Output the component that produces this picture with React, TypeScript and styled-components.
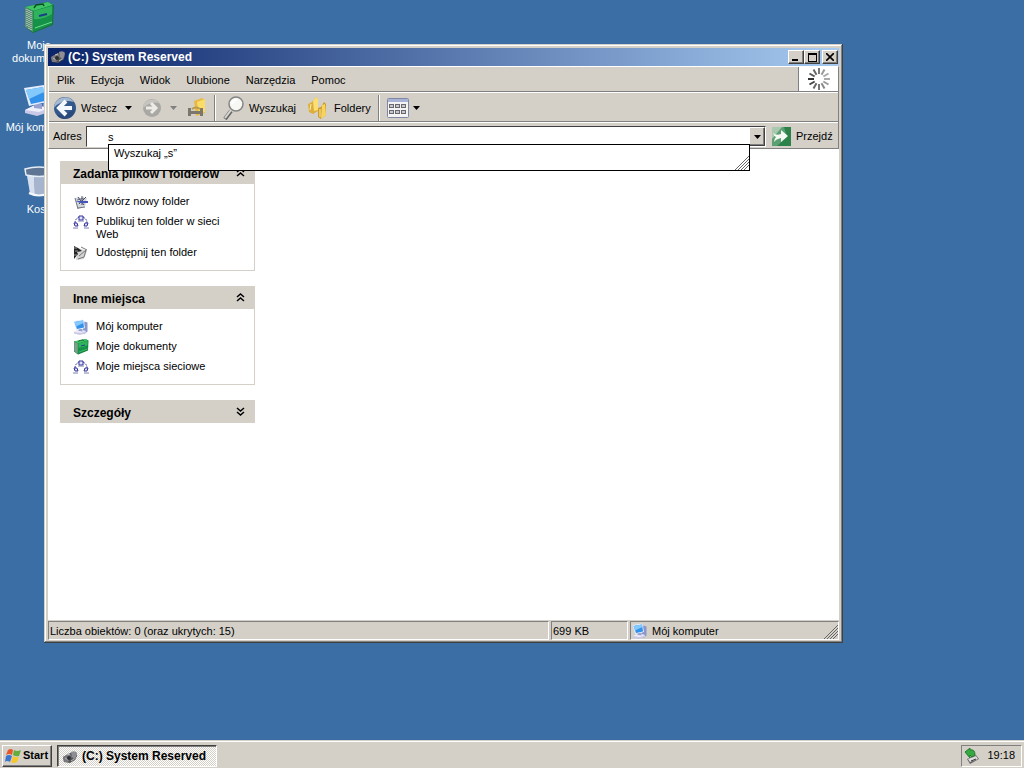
import {useState} from 'react';
import type {ReactNode} from 'react';
import styled, {createGlobalStyle, css} from 'styled-components';

const GlobalStyle = createGlobalStyle`
    *{
        box-sizing: border-box;
    }
    body{
        margin: 0;
        font-family: "Liberation Sans", Arial, sans-serif;
        font-size: 11px;
        line-height: 13px;
        color: #000;
    }
    button, input{
        font: inherit;
        color: inherit;
    }
    svg{
        display: block;
        flex: none;
    }
`;

const raised = css`
    border: 1px solid;
    border-color: #fff #404040 #404040 #fff;
    box-shadow: inset -1px -1px #808080;
`;
const sunken = css`
    border: 1px solid;
    border-color: #808080 #fff #fff #808080;
`;

const Screen = styled.div`
    display: flex;
    flex-direction: column;
    min-height: 100vh;
    background: #3a6ea5;
`;
const Desktop = styled.main`
    position: relative;
    flex: 1;
    overflow: hidden;
`;
const Shortcuts = styled.div`
    display: grid;
    grid-auto-rows: 82px;
    width: 78px;
    padding-top: 2px;
`;
const Shortcut = styled.button`
    display: flex;
    flex-direction: column;
    align-items: center;
    gap: 5px;
    padding: 0;
    border: none;
    background: none;
    color: #fff;
`;

const Window = styled.section`
    position: absolute;
    inset: 44px 181px 97px 44px;
    display: flex;
    flex-direction: column;
    padding: 4px 4px 3px;
    background: #d4d0c8;
    box-shadow: inset -1px -1px #404040, inset 1px 1px #d4d0c8, inset -2px -2px #808080, inset 2px 2px #fff;
`;
const TitleBar = styled.header`
    display: flex;
    align-items: center;
    gap: 2px;
    height: 18px;
    padding: 0 1px 0 2px;
    background: linear-gradient(to right, #0a246a, #a6caf0);
    color: #fff;
`;
const Title = styled.h1`
    flex: 1;
    margin: 0;
    font-size: 12px;
    line-height: 14px;
`;
const CaptionButton = styled.button<{$joined?: boolean}>`
    ${raised}
    display: flex;
    align-items: center;
    justify-content: center;
    width: 16px;
    height: 14px;
    margin-left: ${(props) => props.$joined ? '-2px' : '0'};
    padding: 0;
    background: #d4d0c8;
`;

const Bars = styled.div`
    border: 1px solid #808080;
    border-top-color: #fff;
    border-left-color: #fff;
`;
const MenuRow = styled.div`
    display: flex;
    height: 25px;
    border-bottom: 1px solid #808080;
`;
const Menu = styled.nav`
    flex: 1;
    display: flex;
    align-items: center;
    border-right: 1px solid #808080;
`;
const MenuItem = styled.button`
    padding: 2px 8px 0;
    border: none;
    background: none;
`;
const Throbber = styled.div`
    display: flex;
    align-items: center;
    justify-content: center;
    width: 39px;
    background: #fff;
`;
const ToolRow = styled.div`
    display: flex;
    align-items: center;
    gap: 10px;
    height: 30px;
    padding: 1px 1px 0 4px;
    border-top: 1px solid #fff;
    border-bottom: 1px solid #808080;
`;
const ToolButton = styled.button<{$width: number}>`
    display: flex;
    align-items: center;
    gap: 4px;
    width: ${(props) => props.$width}px;
    padding: 0;
    border: none;
    background: none;
    white-space: nowrap;
`;
const ToolLabel = styled.span`
    flex: 1;
    padding-top: 1px;
    text-align: left;
`;
const Separator = styled.div`
    width: 2px;
    height: 26px;
    margin: 0 -3px;
    border-left: 1px solid #808080;
    border-right: 1px solid #fff;
`;
const AddressRow = styled.form`
    display: flex;
    align-items: center;
    gap: 6px;
    height: 26px;
    padding: 2px 1px 0 4px;
    border-top: 1px solid #fff;
`;
const AddressLabel = styled.label`
    width: 27px;
`;
const Combo = styled.div`
    position: relative;
    flex: 1;
    display: flex;
    height: 21px;
    border: 1px solid;
    border-color: #404040 #fff #fff #404040;
    background: #fff;
`;
const AddressInput = styled.input`
    flex: 1;
    min-width: 0;
    padding: 1px 0 0 21px;
    border: none;
    outline: none;
    background: none;
`;
const ComboButton = styled.button`
    ${raised}
    display: flex;
    align-items: center;
    justify-content: center;
    width: 16px;
    padding: 0;
    background: #d4d0c8;
`;
const Suggestions = styled.div`
    position: absolute;
    z-index: 1;
    top: 17px;
    left: 21px;
    right: 15px;
    display: flex;
    justify-content: space-between;
    height: 27px;
    padding-left: 5px;
    border: 1px solid #000;
    background: #fff;
`;
const Suggestion = styled.button`
    align-self: flex-start;
    padding: 2px 0;
    border: none;
    background: none;
`;
const Grip = styled.svg`
    align-self: flex-end;
`;
const GoButton = styled.button`
    display: flex;
    align-items: center;
    gap: 5px;
    width: 65px;
    padding: 0;
    border: none;
    background: none;
`;

const Content = styled.div`
    flex: 1;
    padding: 12px;
    background: #fff;
`;
const Sidebar = styled.aside`
    display: flex;
    flex-direction: column;
    gap: 15px;
    width: 195px;
`;
const PanelHeader = styled.button`
    display: flex;
    align-items: center;
    justify-content: space-between;
    width: 100%;
    height: 23px;
    padding: 0 10px 0 13px;
    border: none;
    background: #d4d0c8;
    font-weight: bold;
    font-size: 12px;
`;
const PanelTitle = styled.span`
    padding-top: 3px;
`;
const PanelBody = styled.div`
    display: flex;
    flex-direction: column;
    gap: 4px;
    padding: 10px 24px 9px 12px;
    border: 1px solid #d4d0c8;
    border-top: none;
`;
const Task = styled.a`
    display: flex;
    gap: 7px;
    min-height: 16px;
    color: inherit;
    text-decoration: none;
`;
const TaskLabel = styled.span`
    padding-top: 1px;
`;

const StatusBar = styled.footer`
    display: flex;
    gap: 2px;
    height: 20px;
    padding-top: 1px;
`;
const StatusField = styled.div<{$width?: number}>`
    ${sunken}
    flex: ${(props) => props.$width ? `0 0 ${props.$width}px` : '1'};
    display: flex;
    align-items: center;
    gap: 4px;
    padding: 1px 0 0 1px;
`;
const StatusGrip = styled(Grip)`
    margin-left: auto;
`;

const Taskbar = styled.footer`
    display: flex;
    align-items: center;
    gap: 5px;
    height: 28px;
    padding: 3px 2px 1px;
    border-top: 1px solid #d4d0c8;
    box-shadow: inset 0 1px #fff;
    background: #d4d0c8;
`;
const StartButton = styled.button`
    ${raised}
    display: flex;
    align-items: center;
    gap: 1px;
    width: 50px;
    height: 22px;
    padding: 0 1px;
    background: #d4d0c8;
    font-weight: bold;
`;
const TaskButton = styled.button`
    display: flex;
    align-items: center;
    gap: 4px;
    width: 160px;
    height: 22px;
    padding: 2px 4px 0;
    border: 1px solid;
    border-color: #404040 #fff #fff #404040;
    box-shadow: inset 1px 1px #808080;
    background: repeating-conic-gradient(#fff 0 25%, #d4d0c8 0 50%) 0 0 / 2px 2px;
    font-weight: bold;
    font-size: 12px;
`;
const Tray = styled.div`
    ${sunken}
    display: flex;
    align-items: center;
    justify-content: space-between;
    width: 61px;
    height: 22px;
    margin-left: auto;
    padding: 0 6px 0 2px;
`;

const DocumentsIcon = ({size}: {size: number}) => (
    <svg width={size} height={size} viewBox="0 0 32 32">
        <path d="M2 5 25 0l6 3-1 20-20 8-8-6z" fill="#17733c"/>
        <path d="M2 5 25 0l5 3-19 6z" fill="#3fc565"/>
        <path d="m10 9 20-6-1 19-19 8z" fill="#149247"/>
        <path d="m11 9 18-5v8q-9 6-18 5z" fill="#2fb45d"/>
        <path d="m2 5 8 4v21l-8-5z" fill="#5c8f74"/>
        <path d="M4 7v18M6 8v19M8 9v19" stroke="#d6e2da" strokeDasharray="1 1"/>
        <path d="m11 6 2-3 7-1 1 2" fill="none" stroke="#0b4f27" strokeWidth="1.5"/>
        <path d="m16 14 8-2" stroke="#1a3f86" strokeWidth="2"/>
        <path d="m12 26 17-6" stroke="#6fdb8f"/>
    </svg>
);

const ComputerIcon = ({size}: {size: number}) => (
    <svg width={size} height={size} viewBox="0 0 32 32">
        <path d="m23 5 6 2v18l-6 5-4-4z" fill="#8a97cc"/>
        <path d="m2 26 10-5 14 3v4l-12 4-12-3z" fill="#c9c8e6"/>
        <path d="m2 26 10-5 14 3-10 4z" fill="#efeefa"/>
        <path d="m11 19 8 1v5l-8-1z" fill="#97a2cf"/>
        <path d="m1 4 20-3 3 17-18 4z" fill="#e3edff"/>
        <path d="m3 6 17-3 2 14-14 3z" fill="#3391ea"/>
        <path d="m3 6 17-3 1 5L6 15z" fill="#84c9fc"/>
    </svg>
);

const BinIcon = () => (
    <svg width="32" height="32" viewBox="0 0 32 32">
        <path d="m3 5 4 22q9 5 18 0l4-22z" fill="#8398b8"/>
        <path d="m4 9 3 18 5 2-1-19z" fill="#d5dfee"/>
        <path d="m11 10 1 19q5 1 9-1l1-18z" fill="#a6b5cd"/>
        <path d="M2 3q14-4 28 0l-1 6q-13 3-26 0z" fill="#5f7594" stroke="#e6edf6" strokeWidth="1.5"/>
        <path d="M6 27q10 5 20 0" fill="none" stroke="#f4f8ff" strokeWidth="2"/>
    </svg>
);

const DriveIcon = () => (
    <svg width="16" height="16" viewBox="0 0 16 16">
        <path d="m1 8 7-4 6-1 1 4-2 4-5 3-6-1z" fill="#55555a"/>
        <path d="m1 8 7-4 2 4-4 5-4 0z" fill="#77777c"/>
        <path d="M9 3q4-2 6 1l-2 7-3-3z" fill="#8e8e94"/>
        <path d="m3 9 3 2M9 12l3-2M5 6l3-1" stroke="#bbb"/>
        <circle cx="7" cy="9" r="2" fill="#2e2e32"/>
    </svg>
);

const NetworkIcon = () => (
    <svg width="16" height="16" viewBox="0 0 16 16" fill="none" stroke="#34349a">
        <path d="M2 9q0-4 4-6M10 3q4 2 4 6" strokeDasharray="2 1"/>
        <path d="M6 2h4v4H6z" fill="#dfe2fa"/>
        <path d="M5 7h6" stroke="#7c7eb0"/>
        <path d="M1 9h3l1 3H2zM12 9h3l-1 3h-3z" fill="#dfe2fa"/>
        <path d="M0 14h5M11 14h5" stroke="#7c7eb0"/>
    </svg>
);

const NewFolderIcon = () => (
    <svg width="16" height="16" viewBox="0 0 16 16">
        <path d="m2 4 4-1 2 2 6-1-2 9-7 2z" fill="#d3d6dc"/>
        <path d="m2 4 3 11M4 6l7-2M5 14l7-1" stroke="#70757f"/>
        <path d="M9 2v9M5 3l6 8M13 3l-7 7" stroke="#4a5068"/>
        <path d="M3 7h12v2H7z" fill="#4654bd"/>
    </svg>
);

const ShareIcon = () => (
    <svg width="16" height="16" viewBox="0 0 16 16">
        <path d="m5 3 9 3-3 8-8 1z" fill="#d4d4d4"/>
        <path d="M1 1v13l4-5-1-2 5-1-4-3z" fill="#242424"/>
        <path d="m6 11 7-6-2 7-6 2M8 2l6 3" fill="none" stroke="#777"/>
        <path d="M1 3h3M2 6h3M1 10h3" stroke="#999"/>
    </svg>
);

const BackIcon = () => (
    <svg width="24" height="24" viewBox="0 0 24 24">
        <circle cx="12" cy="12" r="11" fill="#33598c"/>
        <path d="M1 12a11 11 0 0 1 20-6q-7-2-12 0t-8 6" fill="#a5b8d1"/>
        <path d="M4 19q8 0 18-6-1 9-10 10-5 0-8-4" fill="#2a4a7c"/>
        <path d="m13 5-7 7 7 7M7 12h12" fill="none" stroke="#f4f8fc" strokeWidth="4"/>
    </svg>
);

const ForwardIcon = () => (
    <svg width="20" height="20" viewBox="0 0 20 20">
        <circle cx="10" cy="10" r="9" fill="#a9a8a4"/>
        <path d="M1 10a9 9 0 0 1 16-5Q9 3 1 10" fill="#c6c5c0"/>
        <path d="m9 5 5 5-5 5M4 10h9" fill="none" stroke="#ecebe6" strokeWidth="3"/>
    </svg>
);

const UpIcon = () => (
    <svg width="20" height="22" viewBox="0 0 20 22">
        <path d="m7 4 8-3 3 2v13l-9 3z" fill="#e6ba45"/>
        <path d="m10 5 8-3v13l-6 2z" fill="#fbdc66"/>
        <path d="M1 19v-8h3v3h9v-3h3v8h-3v-2H4v2z" fill="#7b776c"/>
        <path d="M5 12q4-3 8 0" fill="none" stroke="#b89a4c" strokeWidth="2"/>
    </svg>
);

const SearchIcon = () => (
    <svg width="22" height="24" viewBox="0 0 22 24">
        <path d="m8 15-6 8" stroke="#686868" strokeWidth="4"/>
        <path d="m8 14-6 8" stroke="#d8d8d6" strokeWidth="2"/>
        <circle cx="13" cy="8" r="7" fill="#f7f7f4" stroke="#858585" strokeWidth="1.5"/>
        <path d="M9 8q1-4 5-4" fill="none" stroke="#fff" strokeWidth="2"/>
    </svg>
);

const FoldersIcon = () => (
    <svg width="24" height="24" viewBox="0 0 24 24">
        <path d="m2 8 4-2 4-5 2 2v12l-5 3-4-2z" fill="#dcae3c"/>
        <path d="m7 5 3-4 2 2v11l-4 1z" fill="#fbdf72"/>
        <path d="m12 12 3-1 3-5 2 2v11l-5 4-3-2z" fill="#cf9a2c"/>
        <path d="m16 9 3-1 1 11-5 4z" fill="#f7d45f"/>
        <path d="m5 8-1 6M14 13v8" stroke="#fff0a7"/>
    </svg>
);

const ViewsIcon = () => (
    <svg width="22" height="20" viewBox="0 0 22 20">
        <rect x="0.5" y="0.5" width="21" height="19" rx="1" fill="#f4f4f5" stroke="#8087a5"/>
        <path d="M1 1h20v3H1z" fill="#a9b3d7"/>
        <g fill="#c9c9cd" stroke="#68686e">
            {[2.5, 8.5, 14.5].map((x) => [6.5, 12.5].map((y) => (
                <rect key={`${x}-${y}`} x={x} y={y} width="4" height="3"/>
            )))}
        </g>
    </svg>
);

const GoIcon = () => (
    <svg width="19" height="19" viewBox="0 0 19 19">
        <path d="M0 0h19v19H0z" fill="#5c9f72"/>
        <path d="M0 0h10L0 12z" fill="#a9c9af"/>
        <path d="M12 0h7v19H5l10-9z" fill="#2d814b"/>
        <path d="M1 6q3 3 8 1V3l7 6-7 6v-4q-5 1-7 4 0-3 2-5-2-1-3-4z" fill="#f5fbf2"/>
    </svg>
);

const FlagIcon = () => (
    <svg width="18" height="16" viewBox="0 0 18 16">
        <path d="M4 2q3-2 5 0L8 7Q5 5 2 7z" fill="#e8562c"/>
        <path d="M10 2q3 2 7 0l-2 6q-3 1-6-1z" fill="#62ad3b"/>
        <path d="M2 8q3-2 6 0l-2 6q-3-2-5 0z" fill="#3c75cf"/>
        <path d="M9 8q3 2 6 1l-2 5q-4 2-6 0z" fill="#f6c62e"/>
    </svg>
);

const TrayIcon = () => (
    <svg width="16" height="16" viewBox="0 0 16 16">
        <path d="m3 11 9-4 3 4-9 5z" fill="#666"/>
        <path d="m4 11 8-3 2 3-8 3z" fill="#ddd"/>
        <path d="m7 13 5-2" stroke="#333"/>
        <path d="m1 4 5-4v2q5-1 5 5l-3 2-2-2v3z" fill="#36a943" stroke="#217a2b"/>
    </svg>
);

const Caret = ({color = '#000'}: {color?: string}) => (
    <svg width="7" height="4" viewBox="0 0 7 4">
        <path d="M0 0h7L3.5 4z" fill={color}/>
    </svg>
);

const Chevrons = ({down = false}: {down?: boolean}) => (
    <svg width="9" height="9" viewBox="0 0 9 9" fill="none" stroke="#000" strokeWidth="1.5">
        <path d={down ? 'm1 1 3.5 3L8 1M1 5l3.5 3L8 5' : 'm1 4 3.5-3L8 4M1 8l3.5-3L8 8'}/>
    </svg>
);

const GripLines = () => (
    <path d="m0 14L14 0M3 14L14 3M6 14l8-8M9 14l5-5" stroke="#666" fill="none"/>
);

const spokeColors = ['#777', '#999', '#aaa', '#aaa', '#999', '#888', '#777', '#666', '#444', '#333', '#555', '#666'];

interface PanelProps {
    title: string;
    open?: boolean;
    children?: ReactNode;
}

function Panel({title, open = false, children}: PanelProps) {
    const [expanded, setExpanded] = useState<boolean>(open);
    return (
        <section>
            <PanelHeader aria-expanded={expanded} onClick={() => setExpanded(!expanded)}>
                <PanelTitle>{title}</PanelTitle>
                <Chevrons down={!expanded}/>
            </PanelHeader>
            {expanded && children && <PanelBody>{children}</PanelBody>}
        </section>
    );
}

function TaskLink({icon, children}: {icon: ReactNode; children: ReactNode}) {
    return (
        <Task href="#">
            {icon}
            <TaskLabel>{children}</TaskLabel>
        </Task>
    );
}

export default function App() {
    const [address, setAddress] = useState<string>('s');

    return (
        <Screen>
            <GlobalStyle/>
            <Desktop>
                <Shortcuts>
                    <Shortcut><DocumentsIcon size={32}/>Moje dokumenty</Shortcut>
                    <Shortcut><ComputerIcon size={32}/>Mój komputer</Shortcut>
                    <Shortcut><BinIcon/>Kosz</Shortcut>
                </Shortcuts>
                <Window>
                    <TitleBar>
                        <DriveIcon/>
                        <Title>(C:) System Reserved</Title>
                        <CaptionButton aria-label="Minimalizuj">
                            <svg width="10" height="8"><path d="M1 6h6v2H1z"/></svg>
                        </CaptionButton>
                        <CaptionButton $joined aria-label="Maksymalizuj">
                            <svg width="9" height="9"><path d="M0 0h9v9H0zM1 2v6h7V2z" fillRule="evenodd"/></svg>
                        </CaptionButton>
                        <CaptionButton aria-label="Zamknij">
                            <svg width="8" height="8"><path d="m0 0 8 8M8 0 0 8" stroke="#000" strokeWidth="1.6"/></svg>
                        </CaptionButton>
                    </TitleBar>
                    <Bars>
                        <MenuRow>
                            <Menu>
                                {['Plik', 'Edycja', 'Widok', 'Ulubione', 'Narzędzia', 'Pomoc'].map((item) => (
                                    <MenuItem key={item}>{item}</MenuItem>
                                ))}
                            </Menu>
                            <Throbber>
                                <svg width="22" height="22" viewBox="-11 -11 22 22">
                                    {spokeColors.map((color, i) => (
                                        <path key={i} d="M0-5v-6" stroke={color} strokeWidth="2" transform={`rotate(${i * 30})`}/>
                                    ))}
                                </svg>
                            </Throbber>
                        </MenuRow>
                        <ToolRow>
                            <ToolButton $width={79}><BackIcon/><ToolLabel>Wstecz</ToolLabel><Caret/></ToolButton>
                            <ToolButton $width={35} disabled aria-label="Dalej">
                                <ForwardIcon/><ToolLabel/><Caret color="#808080"/>
                            </ToolButton>
                            <ToolButton $width={20} aria-label="W górę"><UpIcon/></ToolButton>
                            <Separator/>
                            <ToolButton $width={73}><SearchIcon/><ToolLabel>Wyszukaj</ToolLabel></ToolButton>
                            <ToolButton $width={65}><FoldersIcon/><ToolLabel>Foldery</ToolLabel></ToolButton>
                            <Separator/>
                            <ToolButton $width={33} aria-label="Widoki"><ViewsIcon/><Caret/></ToolButton>
                        </ToolRow>
                        <AddressRow onSubmit={(e) => e.preventDefault()}>
                            <AddressLabel htmlFor="address">Adres</AddressLabel>
                            <Combo>
                                <AddressInput
                                    id="address"
                                    type="text"
                                    autoComplete="off"
                                    value={address}
                                    onChange={(e) => setAddress(e.target.value)}
                                />
                                <ComboButton type="button" aria-label="Rozwiń"><Caret/></ComboButton>
                                {address !== '' && (
                                    <Suggestions>
                                        <Suggestion type="button">Wyszukaj „{address}”</Suggestion>
                                        <Grip width="14" height="14"><GripLines/></Grip>
                                    </Suggestions>
                                )}
                            </Combo>
                            <GoButton type="submit"><GoIcon/>Przejdź</GoButton>
                        </AddressRow>
                    </Bars>
                    <Content>
                        <Sidebar>
                            <Panel title="Zadania plików i folderów" open>
                                <TaskLink icon={<NewFolderIcon/>}>Utwórz nowy folder</TaskLink>
                                <TaskLink icon={<NetworkIcon/>}>Publikuj ten folder w sieci Web</TaskLink>
                                <TaskLink icon={<ShareIcon/>}>Udostępnij ten folder</TaskLink>
                            </Panel>
                            <Panel title="Inne miejsca" open>
                                <TaskLink icon={<ComputerIcon size={16}/>}>Mój komputer</TaskLink>
                                <TaskLink icon={<DocumentsIcon size={16}/>}>Moje dokumenty</TaskLink>
                                <TaskLink icon={<NetworkIcon/>}>Moje miejsca sieciowe</TaskLink>
                            </Panel>
                            <Panel title="Szczegóły"/>
                        </Sidebar>
                    </Content>
                    <StatusBar>
                        <StatusField>Liczba obiektów: 0 (oraz ukrytych: 15)</StatusField>
                        <StatusField $width={77}>699 KB</StatusField>
                        <StatusField $width={209}>
                            <ComputerIcon size={16}/>
                            Mój komputer
                            <StatusGrip width="14" height="14"><GripLines/></StatusGrip>
                        </StatusField>
                    </StatusBar>
                </Window>
            </Desktop>
            <Taskbar>
                <StartButton><FlagIcon/>Start</StartButton>
                <TaskButton aria-pressed="true"><DriveIcon/>(C:) System Reserved</TaskButton>
                <Tray>
                    <TrayIcon/>
                    <time>19:18</time>
                </Tray>
            </Taskbar>
        </Screen>
    );
}
